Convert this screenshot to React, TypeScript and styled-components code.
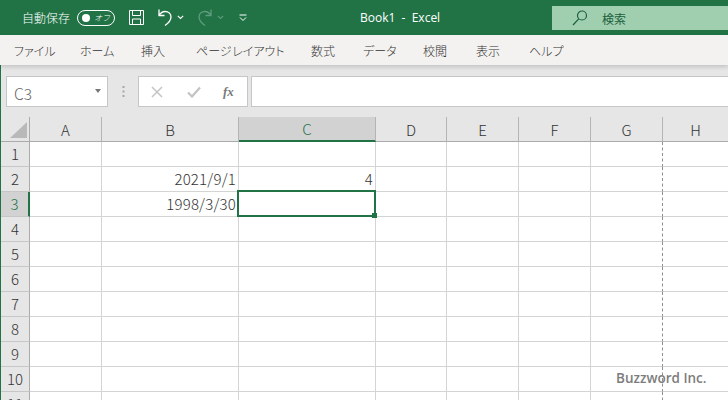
import { Fragment } from "react";
import styled, { createGlobalStyle } from "styled-components";

const columns = [
    { label: "A", width: 72 },
    { label: "B", width: 137 },
    { label: "C", width: 137, active: true },
    { label: "D", width: 71 },
    { label: "E", width: 72 },
    { label: "F", width: 72 },
    { label: "G", width: 72 },
    { label: "H", width: 66 },
];
const tabs = ["ファイル", "ホーム", "挿入", "ページ レイアウト", "数式", "データ", "校閲", "表示", "ヘルプ"];
const tabGaps = [14, 80, 141, 196, 311, 363, 423, 476, 529];
const rows = [1, 2, 3, 4, 5, 6, 7, 8, 9, 10, 11];
const values: Record<string, string> = { "2-B": "2021/9/1", "2-C": "4", "3-B": "1998/3/30" };

const GlobalStyle = createGlobalStyle`
    html, body {
        margin: 0;
        padding: 0;
        background: #fff;
    }
    body {
        font-family: "Noto Sans", "Noto Sans CJK JP", sans-serif;
    }
`;

const Page = styled.div`
    width: 728px;
    height: 400px;
    overflow: hidden;
    position: relative;
    display: flex;
    flex-direction: column;
`;
const TitleBar = styled.div`
    height: 35px;
    flex: none;
    background: #217346;
    color: #fff;
    display: grid;
    grid-template-columns: 360px 192px 1fr;
    align-items: center;
`;
const Qat = styled.div`
    display: flex;
    align-items: center;
    padding-left: 22px;
`;
const AutoSave = styled.span`
    font: 300 12px "Noto Sans CJK JP", sans-serif;
    width: 55px;
    flex: none;
`;
const Toggle = styled.div`
    width: 28px;
    height: 14px;
    border: 1px solid #fff;
    border-radius: 8px;
    display: flex;
    align-items: center;
    justify-content: space-between;
    padding: 0 4px;
    margin-right: 13px;
`;
const Knob = styled.span`
    width: 8px;
    height: 8px;
    border-radius: 50%;
    background: #fff;
`;
const ToggleText = styled.span`
    font: italic 300 8px "Noto Sans CJK JP", sans-serif;
`;
const IconSlot = styled.span<{ $w: number }>`
    display: flex;
    align-items: center;
    width: ${(p) => p.$w}px;
    flex: none;
`;
const Title = styled.div`
    font-size: 12px;
    font-family: "Open Sans", sans-serif;
    white-space: pre;
    color: #fff;
`;
const SearchBox = styled.div`
    height: 24px;
    align-self: start;
    margin-top: 6px;
    background: #a0cfb0;
    color: #1c5f3c;
    display: flex;
    align-items: center;
    padding-left: 20px;
    gap: 14px;
    font: 400 12px "Noto Sans CJK JP", sans-serif;
`;
const RibbonTabs = styled.div`
    height: 30px;
    flex: none;
    background: #f3f2f1;
    display: flex;
    align-items: center;
    padding-left: 14px;
    box-shadow: 0 2px 4px rgba(0, 0, 0, 0.15);
    position: relative;
    z-index: 1;
`;
const Tab = styled.span<{ $w: number }>`
    width: ${(p) => p.$w}px;
    flex: none;
    font: 300 12px "Noto Sans CJK JP", sans-serif;
    font-feature-settings: "palt";
    word-spacing: -2px;
    color: #333;
    white-space: nowrap;
`;
const FormulaRow = styled.div`
    height: 52px;
    flex: none;
    background: #e6e6e6;
    display: flex;
    align-items: flex-start;
    padding: 11px 0 0 5px;
    box-sizing: border-box;
    border-left: 1px solid #217346;
`;
const NameBox = styled.div`
    width: 102px;
    height: 31px;
    box-sizing: border-box;
    background: #fff;
    border: 1px solid #c6c6c6;
    display: flex;
    align-items: center;
    justify-content: space-between;
    padding: 2px 6px 0 7px;
    font: 300 15.500px "Noto Sans CJK JP", sans-serif;
    color: #666;
`;
const Caret = styled.span`
    width: 0;
    height: 0;
    margin-top: -4px;
    border-left: 3.500px solid transparent;
    border-right: 3.500px solid transparent;
    border-top: 4px solid #777;
`;
const Grip = styled.span`
    width: 30px;
    height: 31px;
    flex: none;
    display: flex;
    align-items: center;
    justify-content: center;
`;
const FxBox = styled.div`
    width: 110px;
    height: 31px;
    box-sizing: border-box;
    background: #fff;
    border: 1px solid #c6c6c6;
    display: flex;
    align-items: center;
    margin-right: 3px;
    padding-left: 12px;
    flex: none;
`;
const CancelMark = styled.svg`
    flex: none;
`;
const EnterMark = styled.svg`
    flex: none;
    margin-left: 24px;
`;
const FxLabel = styled.span`
    margin-left: 22px;
    font: italic 700 13px "Liberation Serif", serif;
    color: #7a7a7a;
`;
const FormulaInput = styled.div`
    flex: 1;
    height: 31px;
    box-sizing: border-box;
    background: #fff;
    border: 1px solid #c6c6c6;
    border-right: 0;
`;
const Sheet = styled.div`
    position: relative;
    flex: 1;
    min-height: 0;
    border-left: 1px solid #217346;
`;
const Grid = styled.div`
    display: grid;
    grid-template-columns: 29px ${columns.map((c) => c.width + "px").join(" ")};
    grid-auto-rows: 25px;
`;
const Corner = styled.div`
    background: #e6e6e6;
    border-right: 1px solid #ababab;
    border-bottom: 1px solid #ababab;
    box-sizing: border-box;
    position: relative;
    &::after {
        content: "";
        position: absolute;
        right: 2px;
        bottom: 3px;
        border-style: solid;
        border-width: 0 0 16px 17px;
        border-color: transparent transparent #b9b9b9 transparent;
    }
`;
const ColHead = styled.div<{ $active?: boolean }>`
    box-sizing: border-box;
    background: ${(p) => (p.$active ? "#d2d2d2" : "#e6e6e6")};
    border-right: 1px solid #b4b4b4;
    border-bottom: ${(p) => (p.$active ? "2px solid #217346" : "1px solid #ababab")};
    color: ${(p) => (p.$active ? "#217346" : "#333")};
    font: 300 15px "Noto Sans CJK JP", sans-serif;
    display: flex;
    align-items: center;
    justify-content: center;
`;
const RowHead = styled.div<{ $active?: boolean }>`
    box-sizing: border-box;
    padding-bottom: 2px;
    background: ${(p) => (p.$active ? "#d2d2d2" : "#e6e6e6")};
    border-right: ${(p) => (p.$active ? "2px solid #217346" : "1px solid #ababab")};
    border-bottom: 1px solid #c6c6c6;
    color: ${(p) => (p.$active ? "#217346" : "#333")};
    font: 300 15px "Noto Sans CJK JP", sans-serif;
    display: flex;
    align-items: center;
    justify-content: center;
`;
const Cell = styled.div<{ $pageBreak?: boolean }>`
    box-sizing: border-box;
    background: #fff;
    border-right: 1px ${(p) => (p.$pageBreak ? "dashed #8e8e8e" : "solid #d4d4d4")};
    border-bottom: 1px solid #d4d4d4;
    font: 300 15px "Noto Sans CJK JP", sans-serif;
    letter-spacing: 0.2px;
    color: #333;
    text-align: right;
    padding-right: 2px;
    line-height: 23px;
    white-space: nowrap;
`;
const Selection = styled.div`
    position: absolute;
    left: 236px;
    top: 73px;
    width: 139px;
    height: 27px;
    box-sizing: border-box;
    border: 2px solid #217346;
    &::after {
        content: "";
        position: absolute;
        right: -3px;
        bottom: -3px;
        width: 5px;
        height: 5px;
        background: #217346;
    }
`;
const WatermarkText = styled.div`
    position: absolute;
    left: 616px;
    top: 369px;
    font: 600 13.500px "Open Sans", sans-serif;
    color: #7d7d7d;
    white-space: nowrap;
`;

function SaveIcon() {
    return (
        <svg width="17" height="17" viewBox="0 0 17 17" fill="none" stroke="#fff" strokeWidth="1">
            <path d="M1.500 1.500h14v14h-14z" />
            <path d="M4.500 1.500v5h8v-5M4.500 15.500v-5.500h8v5.500" />
        </svg>
    );
}
function UndoIcon({ dim }: { dim?: boolean }) {
    return (
        <svg width="17" height="19" viewBox="0 0 17 19" fill="none" stroke={dim ? "#5f9c7d" : "#fff"} strokeWidth="1.300" style={dim ? { transform: "scaleX(-1)" } : undefined}>
            <path d="M2 1.500v6h5.500M2 7.500c1.500-2.500 3.500-4 6-4 3.500 0 6 2.300 6 5.500 0 3.500-2.500 6-6 8.500" />
        </svg>
    );
}
function Chevron({ dim }: { dim?: boolean }) {
    return (
        <svg width="7" height="5" viewBox="0 0 7 5" fill="none" stroke={dim ? "#5f9c7d" : "#fff"} strokeWidth="1.100">
            <path d="M.8.8l2.700 2.700L6.200.8" />
        </svg>
    );
}
function QatMore() {
    return (
        <svg width="8" height="8" viewBox="0 0 8 8" fill="none" stroke="#fff" strokeWidth="1">
            <path d="M.5 1h7M1 3.500l3 3 3-3" />
        </svg>
    );
}
function SearchIcon() {
    return (
        <svg width="16" height="16" viewBox="0 0 16 16" fill="none" stroke="#1c5f3c" strokeWidth="1.200">
            <circle cx="10" cy="5.500" r="4.500" />
            <path d="M6.700 8.800L1 15" />
        </svg>
    );
}

export default function App() {
    return (
        <Page>
            <GlobalStyle />
            <TitleBar>
                <Qat>
                    <AutoSave>自動保存</AutoSave>
                    <Toggle>
                        <Knob />
                        <ToggleText>オフ</ToggleText>
                    </Toggle>
                    <IconSlot $w={29}><SaveIcon /></IconSlot>
                    <IconSlot $w={20}><UndoIcon /></IconSlot>
                    <IconSlot $w={19}><Chevron /></IconSlot>
                    <IconSlot $w={21}><UndoIcon dim /></IconSlot>
                    <IconSlot $w={22}><Chevron dim /></IconSlot>
                    <IconSlot $w={10}><QatMore /></IconSlot>
                </Qat>
                <Title>Book1  -  Excel</Title>
                <SearchBox>
                    <SearchIcon />
                    検索
                </SearchBox>
            </TitleBar>
            <RibbonTabs>
                {tabs.map((t, i) => (
                    <Tab key={t} $w={(tabGaps[i + 1] ?? 600) - tabGaps[i]}>{t}</Tab>
                ))}
            </RibbonTabs>
            <FormulaRow>
                <NameBox>
                    C3
                    <Caret />
                </NameBox>
                <Grip>
                    <svg width="3" height="11" viewBox="0 0 3 11" fill="#a6a6a6">
                        <rect x="0.500" y="0" width="2" height="2" />
                        <rect x="0.500" y="4.500" width="2" height="2" />
                        <rect x="0.500" y="9" width="2" height="2" />
                    </svg>
                </Grip>
                <FxBox>
                    <CancelMark width="12" height="12" viewBox="0 0 12 12" stroke="#c4c4c4" strokeWidth="1.500">
                        <path d="M1 1l10 10M11 1L1 11" />
                    </CancelMark>
                    <EnterMark width="14" height="12" viewBox="0 0 14 12" fill="none" stroke="#c4c4c4" strokeWidth="2.200">
                        <path d="M1 6.500l4 4 8-9" />
                    </EnterMark>
                    <FxLabel>fx</FxLabel>
                </FxBox>
                <FormulaInput />
            </FormulaRow>
            <Sheet>
                <Grid>
                    <Corner />
                    {columns.map((c) => (
                        <ColHead key={c.label} $active={c.active}>{c.label}</ColHead>
                    ))}
                    {rows.map((r) => (
                        <Fragment key={r}>
                            <RowHead $active={r === 3}>{r}</RowHead>
                            {columns.map((c) => (
                                <Cell key={c.label} $pageBreak={c.label === "G"}>{values[`${r}-${c.label}`]}</Cell>
                            ))}
                        </Fragment>
                    ))}
                </Grid>
                <Selection />
            </Sheet>
            <WatermarkText>Buzzword Inc.</WatermarkText>
        </Page>
    );
}
